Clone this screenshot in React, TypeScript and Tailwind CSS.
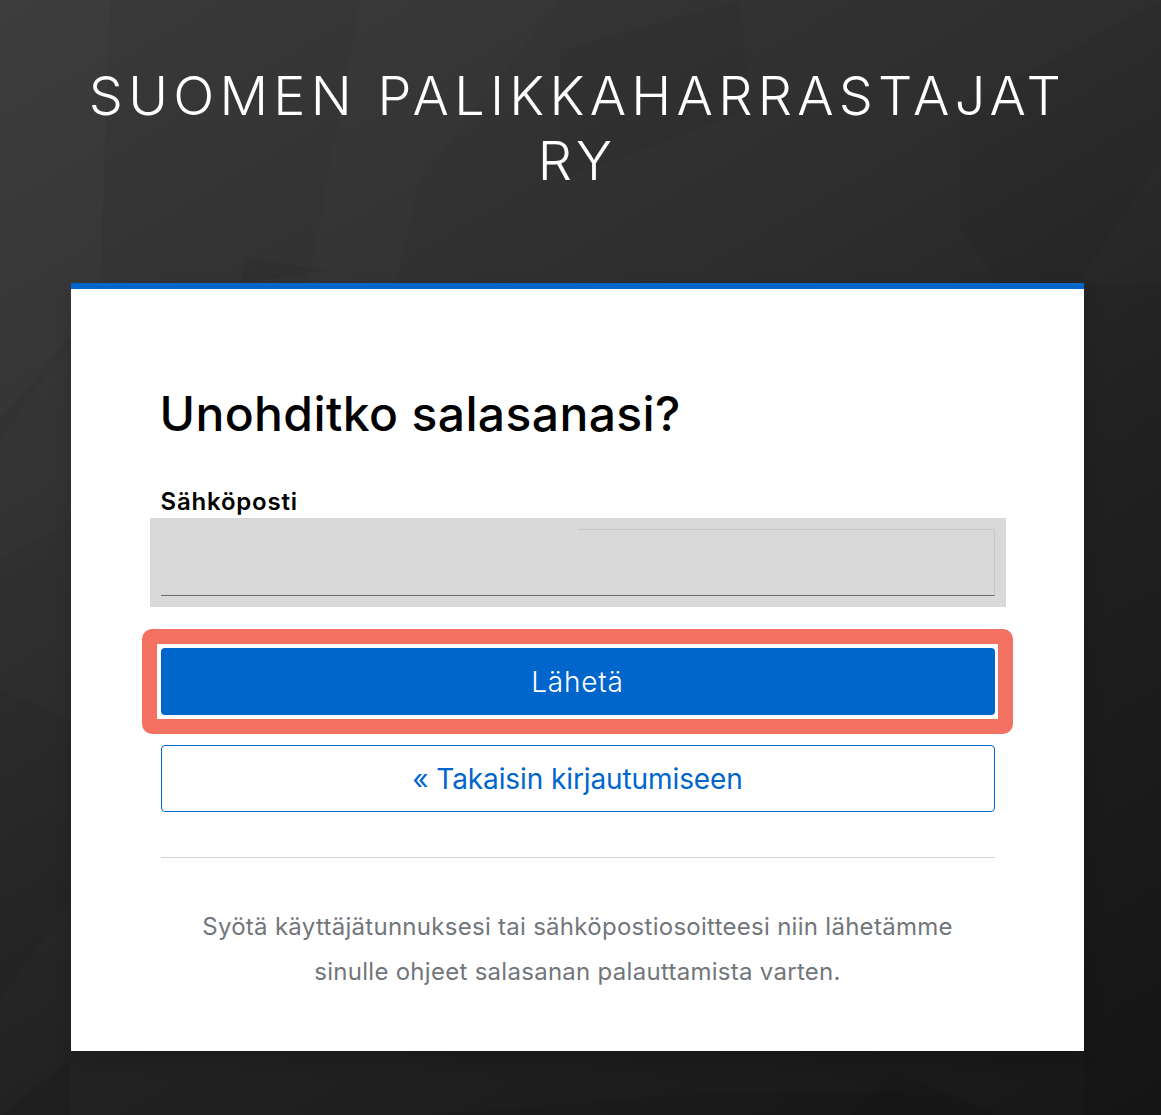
export default function App() {
  const facets: [string, string][] = [
    ["0,0 110,0 100,300 0,420", "#ffffff04"],
    ["360,0 560,0 420,180 330,560 240,660", "#ffffff03"],
    ["560,50 740,0 750,110 560,180", "#00000008"],
    ["960,110 1161,0 1161,160 1040,340 960,230", "#00000008"],
    ["0,440 72,340 72,520 0,560", "#ffffff03"],
    ["245,258 330,270 240,283", "#0000000e"],
    ["1084,283 1161,285 1161,432 1084,436", "#0000000a"],
    ["1084,436 1161,433 1161,1115 1084,1115", "#0000000c"],
    ["0,690 72,720 72,900 0,1000", "#00000008"],
    ["0,1115 70,1060 70,1115", "#00000010"],
    ["430,1115 690,1094 900,1092 1000,1115", "#0000000a"],
    ["850,1115 895,1072 1000,1115", "#0000000c"],
  ];
  return (
    <div className="relative min-h-[1115px] overflow-hidden bg-[linear-gradient(150deg,#3a3a3a_0%,#2e2e2e_37.5%,#222222_62.5%,#171717_100%)] font-['Inter','Liberation_Sans',sans-serif]">
      <svg className="absolute inset-0 h-full w-full" viewBox="0 0 1161 1115" preserveAspectRatio="none" aria-hidden="true">
        {facets.map(([points, fill]) => (
          <polygon key={points} points={points} fill={fill} />
        ))}
      </svg>
      <div className="relative flex flex-col items-center">
        <h1 className="mt-[63px] ml-[-6px] w-[1040px] text-center text-[54px] leading-[65px] font-light tracking-[5.25px] text-white uppercase">
          Suomen palikkaharrastajat ry
        </h1>
        <main className="mt-[90px] ml-[-7px] h-[768px] w-[1013px] border-t-[6px] border-[#0066cc] bg-white pr-[89px] pl-[90px] shadow-[0_8px_16px_rgba(0,0,0,0.15)]">
          <h2 className="mt-[95px] ml-[-1px] text-[48px] leading-[60px] font-medium tracking-[0.4px] text-black">Unohditko salasanasi?</h2>
          <label className="mt-[42px] block text-[24px] leading-[32px] font-semibold tracking-[0.8px] text-black">Sähköposti</label>
          <div className="mx-[-11px] bg-[#d9d9d9] p-[11px]">
            <div className="relative h-[67px] border-r border-b border-r-[#c8c8c8] border-b-[#6a6e73]">
              <div className="absolute top-0 right-0 left-[417px] border-t border-[#c8c8c8]" />
            </div>
          </div>
          <div className="mt-[22px] mr-[-18px] ml-[-19px] rounded-[10px] border-[15px] border-[#f37161] py-[4px] pr-[3px] pl-[4px]">
            <button className="block h-[67px] w-full rounded-[4px] bg-[#0066cc] text-[28px] font-light tracking-[0.8px] text-white">Lähetä</button>
          </div>
          <a className="mt-[11px] flex h-[67px] items-center justify-center rounded-[4px] border border-[#0066cc] text-[28px] tracking-[-0.1px] text-[#0066cc]">« Takaisin kirjautumiseen</a>
          <div className="mt-[45px] border-t border-[#d2d2d2]" />
          <p className="mt-[46px] text-center text-[24px] leading-[45px] tracking-[0.28px] text-[#72767b]">
            Syötä käyttäjätunnuksesi tai sähköpostiosoitteesi niin lähetämme
            <br />
            sinulle ohjeet salasanan palauttamista varten.
          </p>
        </main>
      </div>
    </div>
  );
}
